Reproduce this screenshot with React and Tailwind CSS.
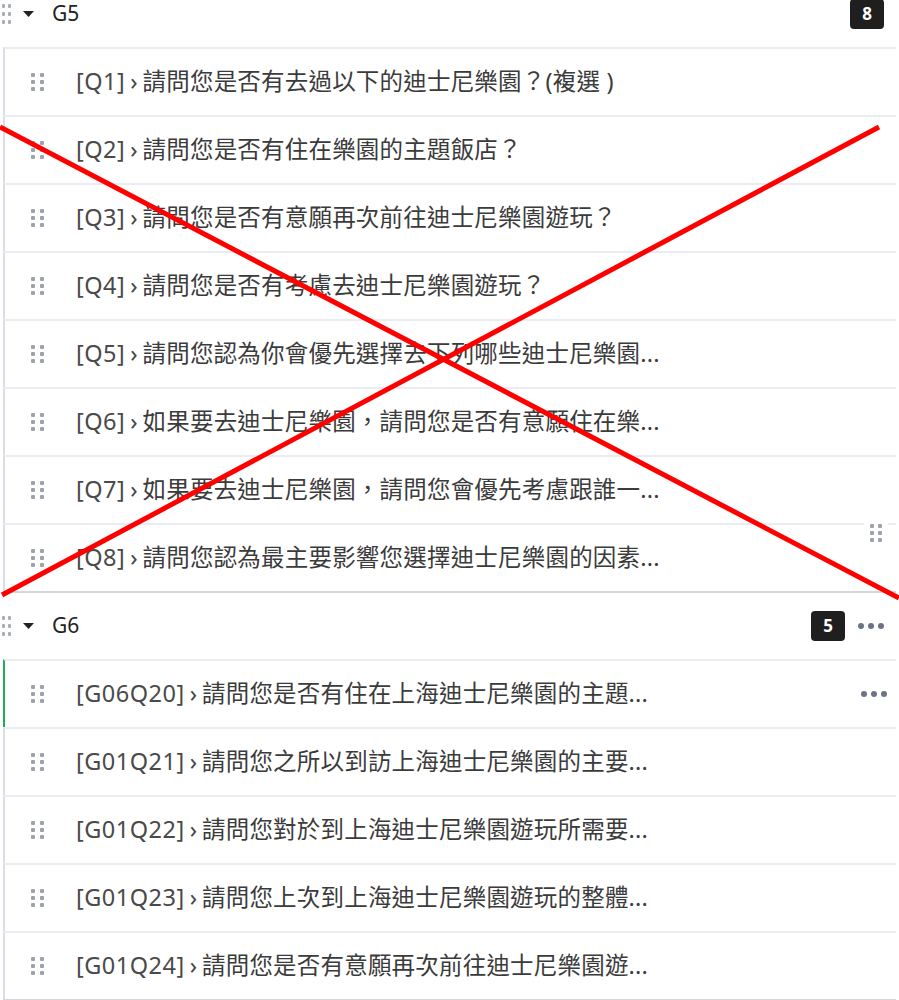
import React from "react";

const font = { fontFamily: '"Noto Sans", "Noto Sans CJK TC", sans-serif' };

function Dots({ small }) {
  if (small) {
    return (
      <div className="grid grid-cols-2 gap-x-[3px] gap-y-[4px] w-[9px]">
        {[0, 1, 2, 3, 4, 5].map((i) => (
          <span key={i} className="block w-[3px] h-[4px] rounded-[1px] bg-[#a9adb8]" />
        ))}
      </div>
    );
  }
  return (
    <div className="grid grid-cols-2 gap-x-[4px] gap-y-[3px] w-[13px]">
      {[0, 1, 2, 3, 4, 5].map((i) => (
        <span key={i} className="block w-[4px] h-[4px] rounded-[1px] bg-[#9ea2ad]" />
      ))}
    </div>
  );
}

function More() {
  return (
    <div className="flex items-center gap-[4px]">
      <span className="block w-[6px] h-[6px] rounded-full bg-[#6b7384]" />
      <span className="block w-[6px] h-[6px] rounded-full bg-[#6b7384]" />
      <span className="block w-[6px] h-[6px] rounded-full bg-[#6b7384]" />
    </div>
  );
}

function Header({ name, count, more }) {
  return (
    <div className="flex items-center h-[66px] pl-[2px] pr-[12px]">
      <Dots small />
      <svg width="11" height="6" viewBox="0 0 11 6" className="ml-[12px]">
        <path d="M0 0 L11 0 L5.5 6 Z" fill="#222" />
      </svg>
      <span className="ml-[18px] text-[21px] text-[#222]">{name}</span>
      <div className="ml-auto flex items-center gap-[13px]">
        <span className="flex items-center justify-center w-[34px] h-[30px] rounded-[4px] bg-[#1f1f1f] text-white text-[17px] font-bold">
          {count}
        </span>
        {more ? <More /> : null}
      </div>
    </div>
  );
}

function Row({ code, text, active, more }) {
  return (
    <div
      className={
        "relative flex items-center h-[68px] border-t-2 border-t-[#ebebf4] border-l-2 " +
        (active ? "border-l-[#1fae52]" : "border-l-[#dcdce6]")
      }
    >
      <div className="ml-[26px]">
        <Dots />
      </div>
      <div className="ml-[32px] text-[23.5px] text-[#3b3b3b] whitespace-nowrap">
        <span className="text-[#4a4a4a] tracking-[0.5px]">{code}</span>
        <span className="mx-[5px] text-[#444]">›</span>
        <span className="tracking-[0.2px]">{text}</span>
      </div>
      {more ? (
        <div className="ml-auto mr-[9px]">
          <More />
        </div>
      ) : null}
    </div>
  );
}

const g5 = [
  ["[Q1]", "請問您是否有去過以下的迪士尼樂園？(複選 )"],
  ["[Q2]", "請問您是否有住在樂園的主題飯店？"],
  ["[Q3]", "請問您是否有意願再次前往迪士尼樂園遊玩？"],
  ["[Q4]", "請問您是否有考慮去迪士尼樂園遊玩？"],
  ["[Q5]", "請問您認為你會優先選擇去下列哪些迪士尼樂園..."],
  ["[Q6]", "如果要去迪士尼樂園，請問您是否有意願住在樂..."],
  ["[Q7]", "如果要去迪士尼樂園，請問您會優先考慮跟誰一..."],
  ["[Q8]", "請問您認為最主要影響您選擇迪士尼樂園的因素..."],
];

const g6 = [
  ["[G06Q20]", "請問您是否有住在上海迪士尼樂園的主題..."],
  ["[G01Q21]", "請問您之所以到訪上海迪士尼樂園的主要..."],
  ["[G01Q22]", "請問您對於到上海迪士尼樂園遊玩所需要..."],
  ["[G01Q23]", "請問您上次到上海迪士尼樂園遊玩的整體..."],
  ["[G01Q24]", "請問您是否有意願再次前往迪士尼樂園遊..."],
];

export default function App() {
  return (
    <div className="relative w-[899px] h-[1000px] overflow-hidden bg-white" style={font}>
      <div className="-mt-[19px] w-[896px]">
        <Header name="G5" count="8" />
        <div className="ml-[3px] border-b-2 border-b-[#d5d5dc]">
          {g5.map(([c, t]) => (
            <Row key={c} code={c} text={t} />
          ))}
        </div>
        <Header name="G6" count="5" more />
        <div className="ml-[3px] border-b-2 border-b-[#d5d5dc]">
          {g6.map(([c, t], i) => (
            <Row key={c} code={c} text={t} active={i === 0} more={i === 0} />
          ))}
        </div>
      </div>

      <div className="absolute left-[864px] top-[520px] w-[24px] h-[26px] bg-white flex items-center justify-center">
        <Dots />
      </div>

      <svg className="absolute left-0 top-0 pointer-events-none" width="899" height="1000" viewBox="0 0 899 1000">
        <line x1="0" y1="127" x2="899" y2="598" stroke="#ff0000" strokeWidth="5" />
        <line x1="879" y1="127" x2="2" y2="595" stroke="#ff0000" strokeWidth="5" />
      </svg>
    </div>
  );
}
